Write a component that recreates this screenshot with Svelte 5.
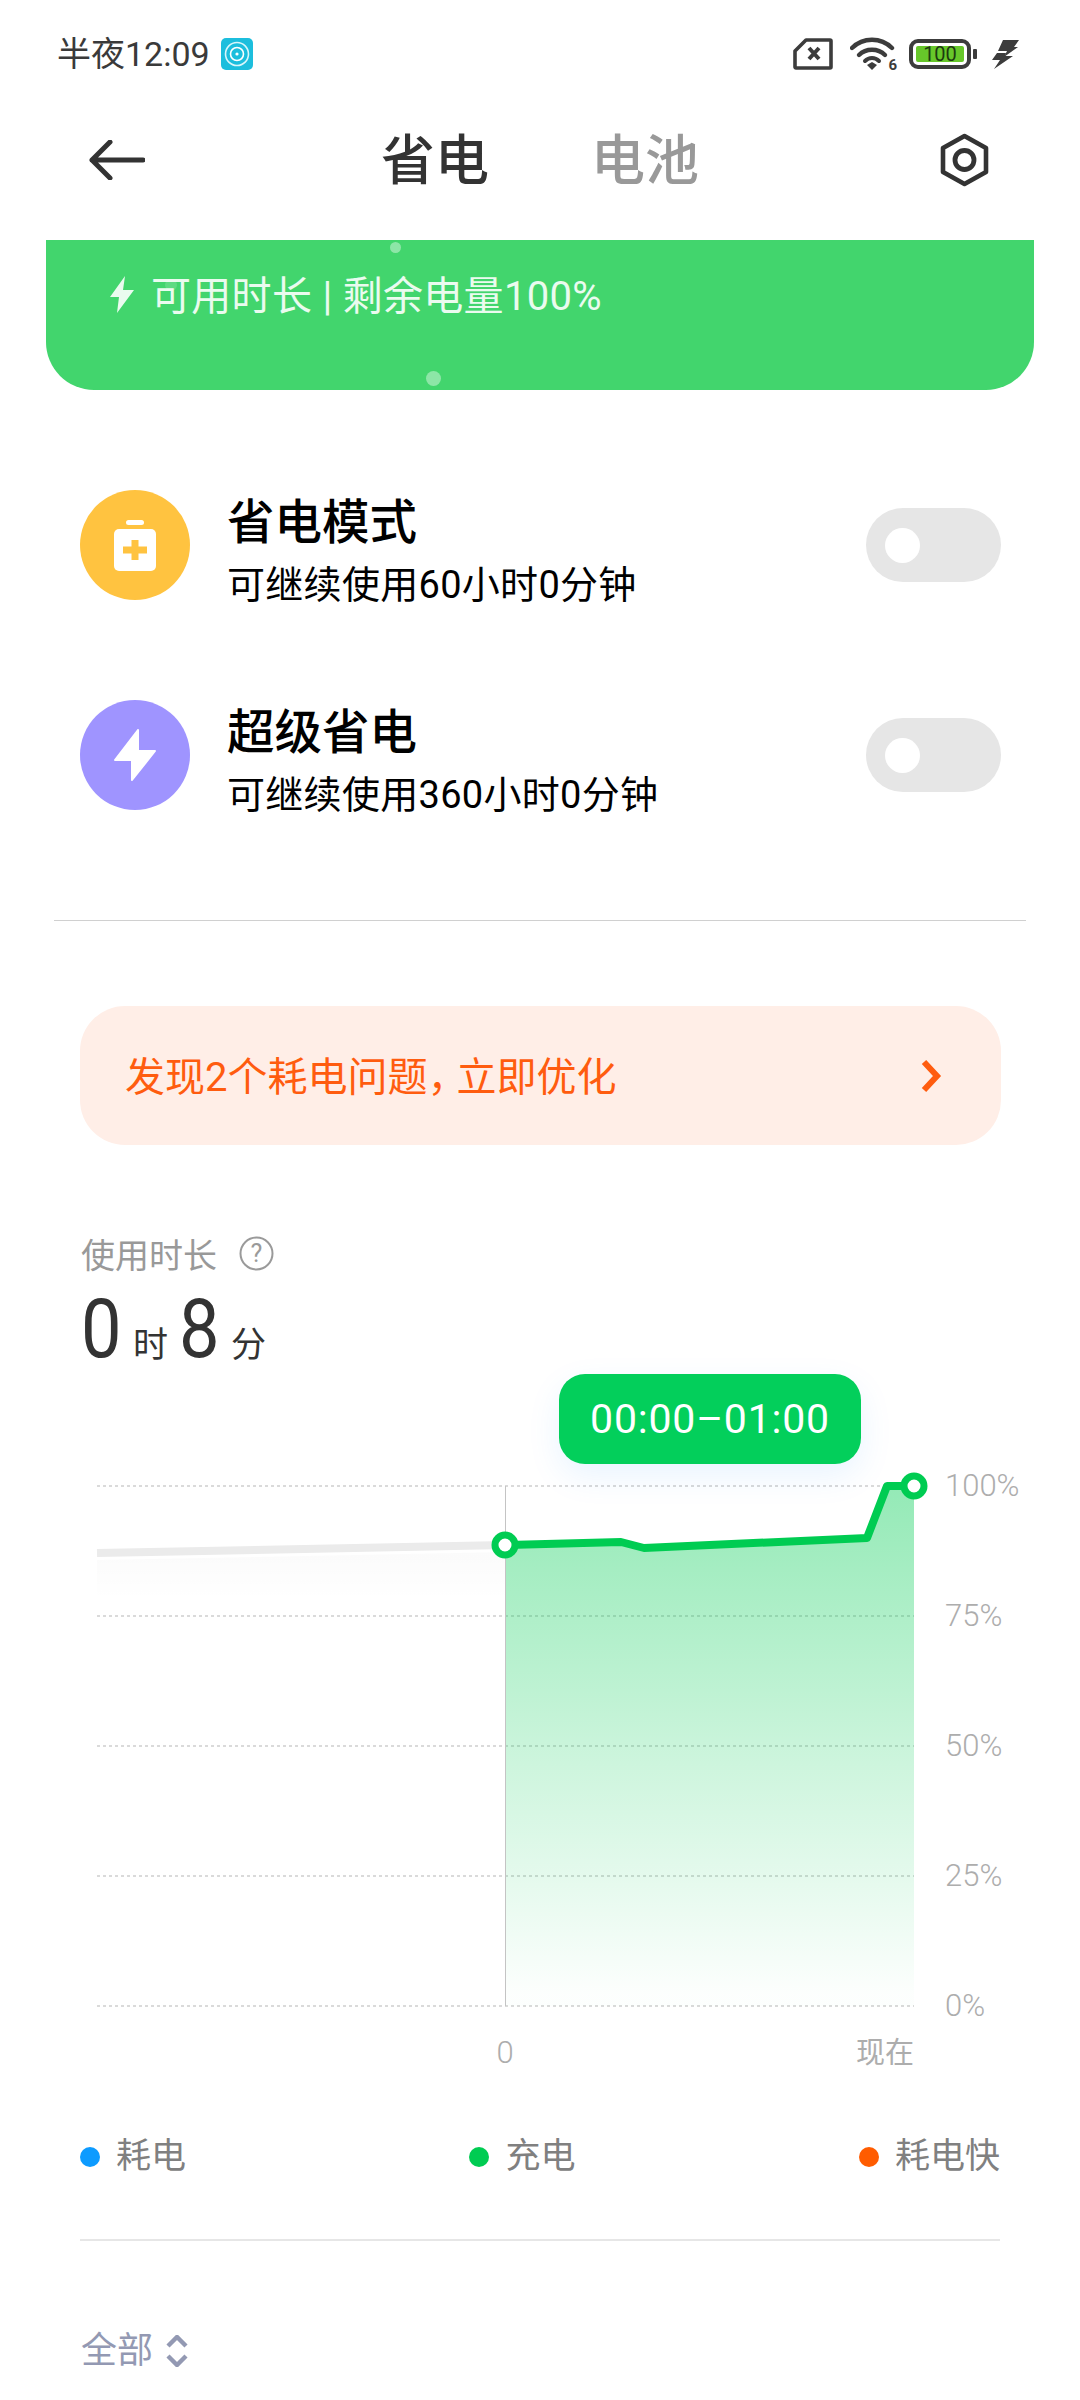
<script>
  const top = 1374;
  const gridYs = [1486, 1616, 1746, 1876, 2006];
  const labels = ["100%", "75%", "50%", "25%", "0%"];
  const line = "506,1545 621,1542 644,1548 867,1538 887,1486 914,1486";
  const area = "506,1545 621,1542 644,1548 867,1538 887,1486 914,1486 914,2006 506,2006";
  const modes = [
    { title: "省电模式", sub: "可继续使用60小时0分钟", color: "#ffc340", kind: "bag" },
    { title: "超级省电", sub: "可继续使用360小时0分钟", color: "#9f94ff", kind: "bolt" }
  ];
  const legend = [
    { text: "耗电", color: "#0d9bff" },
    { text: "充电", color: "#00cc52" },
    { text: "耗电快", color: "#ff5c00" }
  ];
</script>

<div class="page">
  <div class="status">
    <div class="clock">
      <span>半夜12:09</span>
      <svg class="app" width="32" height="32" viewBox="0 0 32 32">
        <rect width="32" height="32" rx="5" fill="#1cbedd" />
        <circle cx="16" cy="16" r="11.5" fill="none" stroke="#d8f6fb" stroke-width="1.6" />
        <circle cx="16" cy="16" r="6.5" fill="none" stroke="#fff" stroke-width="1.6" />
        <circle cx="16" cy="16" r="1.6" fill="#fff" />
      </svg>
    </div>
    <div class="sys">
      <svg width="40" height="32" viewBox="0 0 40 32">
        <path d="M13 2H37a1 1 0 0 1 1 1V29a1 1 0 0 1-1 1H3a1 1 0 0 1-1-1V13Z" fill="none" stroke="#3c3c3c" stroke-width="3.6" stroke-linejoin="round" />
        <path d="M16 10 26 21M26 10 16 21" stroke="#3c3c3c" stroke-width="4" />
      </svg>
      <div class="wifi">
        <svg width="46" height="35" viewBox="0 0 46 35">
          <path d="M2 12C13 1 31 1 42 12" fill="none" stroke="#3c3c3c" stroke-width="4.4" stroke-linecap="round" />
          <path d="M9 19C16 12 28 12 35 19" fill="none" stroke="#3c3c3c" stroke-width="4.4" stroke-linecap="round" />
          <path d="M15 25C19 21 25 21 29 25" fill="none" stroke="#3c3c3c" stroke-width="4" stroke-linecap="round" />
          <path d="M17 29 22 26 27 29 22 34Z" fill="#3c3c3c" />
        </svg>
        <span>6</span>
      </div>
      <div class="battery">
        <div class="cell"><span>100</span></div>
        <i></i>
      </div>
      <svg class="charge" width="27" height="29" viewBox="0 0 27 29">
        <path d="M11 0H27L22 7H26L12 17 15 11H6Z" fill="#3c3c3c" />
        <path d="M5 13H14L13 16H21L2 29 8 20H0Z" fill="#3c3c3c" />
      </svg>
    </div>
  </div>

  <header class="head">
    <svg width="56" height="40" viewBox="0 0 56 40">
      <path d="M54 20H3M21 2 3 20 21 38" fill="none" stroke="#333" stroke-width="5" stroke-linecap="round" stroke-linejoin="round" />
    </svg>
    <div class="tabs">
      <span class="on">省电</span>
      <span>电池</span>
    </div>
    <svg width="49" height="54" viewBox="0 0 49 54">
      <path d="M24.5 3 46 15V39L24.5 51 3 39V15Z" fill="none" stroke="#333" stroke-width="4.6" stroke-linejoin="round" />
      <circle cx="24.5" cy="27" r="9.5" fill="none" stroke="#333" stroke-width="4.8" />
    </svg>
  </header>

  <section class="card">
    <i class="dot d1"></i>
    <i class="dot d2"></i>
    <i class="dot d3"></i>
    <svg width="24" height="37" viewBox="0 0 24 37">
      <path d="M15 0 0 21H9L7 37 24 14H13Z" fill="#eafbef" />
    </svg>
    <span>可用时长 | 剩余电量100%</span>
  </section>

  <section class="modes">
    {#each modes as m}
      <div class="mode">
        <div class="badge" style="background:{m.color}">
          {#if m.kind === "bag"}
            <svg width="42" height="51" viewBox="0 0 42 51">
              <rect x="12" y="0" width="18" height="5" rx="2.5" fill="#fff" />
              <rect x="0" y="9" width="42" height="42" rx="5" fill="#fff" />
              <path d="M9 30H33M21 20V40" stroke={m.color} stroke-width="7" />
            </svg>
          {:else}
            <svg width="42" height="52" viewBox="0 0 42 52">
              <path d="M24 1V22H41L18 51V31H1Z" fill="#fff" stroke="#fff" stroke-width="2" stroke-linejoin="round" />
            </svg>
          {/if}
        </div>
        <div class="mode-text">
          <div class="mode-title">{m.title}</div>
          <div class="mode-sub">{m.sub}</div>
        </div>
        <div class="toggle"><i></i></div>
      </div>
    {/each}
  </section>

  <div class="rule"></div>

  <div class="alert">
    <span class="alert-text">发现2个耗电问题<span class="comma">，</span>立即优化</span>
    <svg width="22" height="34" viewBox="0 0 22 34">
      <path d="M4 3 17 17 4 31" fill="none" stroke="#ff5c0f" stroke-width="6" />
    </svg>
  </div>

  <section class="usage">
    <div class="usage-head">
      <span>使用时长</span>
      <svg width="35" height="35" viewBox="0 0 35 35">
        <circle cx="17.5" cy="17.5" r="16" fill="none" stroke="#9a9a9a" stroke-width="2" />
        <text x="17.5" y="26" text-anchor="middle" class="q">?</text>
      </svg>
    </div>
    <div class="usage-num">
      <b>0</b><span>时</span><b>8</b><span>分</span>
    </div>
  </section>

  <section class="chart">
    <div class="tip">00:00–01:00</div>
    <svg width="1080" height="706" viewBox="0 {top} 1080 706">
      <defs>
        <linearGradient id="fill" x1="0" y1="1486" x2="0" y2="1995" gradientUnits="userSpaceOnUse">
          <stop offset="0" stop-color="#00cc52" stop-opacity="0.42" />
          <stop offset="1" stop-color="#00cc52" stop-opacity="0.01" />
        </linearGradient>
        <linearGradient id="fade" x1="0" y1="1560" x2="0" y2="1600" gradientUnits="userSpaceOnUse">
          <stop offset="0" stop-color="#000" stop-opacity="0.015" />
          <stop offset="1" stop-color="#000" stop-opacity="0" />
        </linearGradient>
      </defs>
      {#each gridYs as y, i}
        <line x1="97" x2="914" y1={y} y2={y} class="grid" />
        <text x="945" y={y + 10} class="axis">{labels[i]}</text>
      {/each}
      <polygon points="97,1560 505,1552 505,1600 97,1600" fill="url(#fade)" />
      <polygon points={area} fill="url(#fill)" />
      <line x1="505.5" x2="505.5" y1="1486" y2="2006" class="vert" />
      <polyline points="97,1553 505,1545" fill="none" stroke="#ebebeb" stroke-width="8" />
      <polyline points={line} fill="none" stroke="#00cc52" stroke-width="8" stroke-linejoin="round" />
      <circle cx="505" cy="1545" r="10" fill="#fff" stroke="#00cc52" stroke-width="7" />
      <circle cx="914" cy="1486" r="10" fill="#fff" stroke="#00cc52" stroke-width="7" />
      <text x="505" y="2063" text-anchor="middle" class="axis">0</text>
      <text x="914" y="2063" text-anchor="end" class="axis cn">现在</text>
    </svg>
  </section>

  <div class="legend">
    {#each legend as l}
      <div class="key"><i style="background:{l.color}"></i><span>{l.text}</span></div>
    {/each}
  </div>

  <div class="rule2"></div>

  <div class="filter">
    <span>全部</span>
    <svg width="24" height="32" viewBox="0 0 24 32">
      <path d="M3 11 12 2 21 11M3 21 12 30 21 21" fill="none" stroke="#9399b3" stroke-width="4.4" />
    </svg>
  </div>
</div>

<style>
  :global(body) {
    margin: 0;
    background: #fff;
  }

  .page {
    width: 1080px;
    height: 2400px;
    overflow: hidden;
    background: #fff;
    font-family: Roboto, "Noto Sans CJK SC", sans-serif;
  }

  i {
    display: block;
  }

  .status {
    height: 52px;
    padding: 28px 61px 0 57px;
    display: flex;
    justify-content: space-between;
    align-items: center;
  }

  .clock {
    display: flex;
    align-items: center;
    gap: 11px;
    color: #3a3a3a;
    font-size: 34px;
    line-height: 1;
  }

  .sys {
    display: flex;
    align-items: center;
    gap: 15px;
  }

  .sys > svg:first-child {
    margin-right: 2px;
  }

  .wifi {
    position: relative;
    width: 46px;
    height: 35px;
    margin-top: -1px;
    margin-right: -2px;
  }

  .wifi svg {
    display: block;
  }

  .wifi span {
    position: absolute;
    right: -1px;
    bottom: -2px;
    padding-left: 1px;
    background: #fff;
    font-size: 15px;
    font-weight: 700;
    line-height: 15px;
    color: #3c3c3c;
  }

  .battery {
    display: flex;
    align-items: center;
    gap: 2px;
  }

  .cell {
    width: 62px;
    height: 30px;
    box-sizing: border-box;
    border: 4px solid #3c3c3c;
    border-radius: 9px;
    padding: 3px;
  }

  .cell span {
    display: block;
    height: 16px;
    border-radius: 2px;
    background: #67c72a;
    color: #1c3a10;
    font-size: 20px;
    line-height: 16px;
    text-align: center;
  }

  .battery i {
    width: 4px;
    height: 10px;
    border-radius: 1px;
    background: #3c3c3c;
  }

  .head {
    height: 160px;
    padding: 0 91px 0 89px;
    display: flex;
    justify-content: space-between;
    align-items: center;
  }

  .tabs {
    display: flex;
    gap: 102px;
    margin-left: -5px;
    padding-top: 4px;
    color: #999;
    font-size: 54px;
    font-weight: 500;
    line-height: 1;
  }

  .tabs .on {
    color: #333;
  }

  .card {
    position: relative;
    height: 150px;
    margin: 0 46px;
    padding: 36px 0 0 64px;
    box-sizing: border-box;
    display: flex;
    align-items: flex-start;
    gap: 17px;
    background: #42d56d;
    border-radius: 0 0 48px 48px;
    color: #eafbef;
    font-size: 40px;
    line-height: 42px;
    letter-spacing: 0.3px;
  }

  .card svg {
    flex: none;
  }

  .dot {
    position: absolute;
    border-radius: 50%;
    background: rgba(255, 255, 255, 0.4);
  }

  .d1 {
    left: 344px;
    top: 2px;
    width: 11px;
    height: 11px;
  }

  .d2 {
    left: 380px;
    top: 131px;
    width: 15px;
    height: 15px;
  }

  .d3 {
    left: 119px;
    top: 39px;
    width: 12px;
    height: 12px;
    background: rgba(255, 255, 255, 0.15);
  }

  .modes {
    margin-top: 100px;
    padding: 0 79px 0 80px;
    display: flex;
    flex-direction: column;
    gap: 100px;
  }

  .mode {
    display: flex;
    align-items: center;
    height: 110px;
  }

  .badge {
    width: 110px;
    height: 110px;
    border-radius: 50%;
    display: grid;
    place-items: center;
    flex: none;
  }

  .mode-text {
    margin-left: 37px;
    padding-top: 9px;
    color: #000;
  }

  .mode-title {
    font-size: 47.5px;
    font-weight: 500;
    line-height: 60px;
  }

  .mode-sub {
    margin-top: 10px;
    font-size: 38px;
    letter-spacing: 0.3px;
    line-height: 44px;
  }

  .toggle {
    margin-left: auto;
    width: 135px;
    height: 74px;
    border-radius: 37px;
    background: #e6e6e6;
    display: flex;
    align-items: center;
    padding-left: 19px;
    box-sizing: border-box;
  }

  .toggle i {
    width: 35px;
    height: 35px;
    border-radius: 50%;
    background: #fff;
  }

  .rule {
    height: 1px;
    margin: 110px 54px 0;
    background: #d0d0d0;
  }

  .alert {
    height: 139px;
    margin: 85px 79px 0 80px;
    padding: 0 59px 0 45px;
    display: flex;
    align-items: center;
    justify-content: space-between;
    border-radius: 45px;
    background: #ffeee7;
    color: #ff5c0f;
    font-size: 40px;
    line-height: 46px;
  }

  .alert-text {
    padding-top: 5px;
  }

  .comma {
    letter-spacing: -11px;
  }

  .usage {
    margin-top: 90px;
    padding-left: 81px;
  }

  .usage-head {
    display: flex;
    align-items: center;
    gap: 22px;
    height: 37px;
    color: #999;
    font-size: 34px;
  }

  .usage-num {
    display: flex;
    align-items: baseline;
    height: 70px;
    margin-top: 22px;
    color: #333;
    font-size: 35px;
    line-height: 70px;
  }

  .usage-num b {
    width: 52px;
    font-size: 82px;
    font-weight: 400;
    transform: scaleX(0.88);
    transform-origin: left;
  }

  .usage-num span {
    width: 46px;
  }

  .q {
    font-size: 25px;
    fill: #9a9a9a;
  }

  .chart {
    position: relative;
    height: 706px;
    margin-top: 10px;
  }

  .chart svg {
    display: block;
  }

  .tip {
    position: absolute;
    left: 559px;
    top: 0;
    width: 302px;
    height: 90px;
    display: grid;
    place-items: center;
    border-radius: 26px;
    background: #03cf5b;
    box-shadow: 0 12px 34px rgba(0, 130, 255, 0.09);
    color: #fff;
    font-size: 41px;
    letter-spacing: 0.8px;
  }

  .grid {
    stroke: #b5b5b5;
    stroke-width: 1.2;
    stroke-dasharray: 3 3;
  }

  .vert {
    stroke: #c4c4c4;
    stroke-width: 1;
  }

  .axis {
    fill: #adadad;
    font-size: 31px;
    font-weight: 300;
  }

  .cn {
    font-size: 29px;
    font-weight: 400;
  }

  .legend {
    margin-top: 57px;
    padding: 0 80px;
    display: flex;
    justify-content: space-between;
    color: #808080;
    font-size: 35px;
    line-height: 40px;
  }

  .key {
    display: flex;
    align-items: center;
    gap: 16px;
    width: 140px;
  }

  .key:last-child {
    width: auto;
  }

  .key i {
    width: 20px;
    height: 20px;
    border-radius: 50%;
  }

  .rule2 {
    height: 2px;
    margin: 62px 80px 0;
    background: #e6e6e6;
  }

  .filter {
    margin-top: 92px;
    padding-left: 81px;
    display: flex;
    align-items: center;
    gap: 12px;
    color: #9399b3;
    font-size: 36px;
    line-height: 36px;
  }
</style>
